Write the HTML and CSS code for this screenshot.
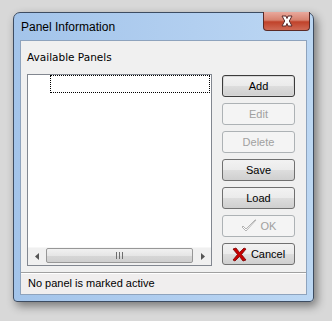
FILE: index.html
```html
<!DOCTYPE html>
<html lang="en">
  <head>
    <meta charset="utf-8" />
    <title>Panel Information</title>
    <link rel="stylesheet" href="styles.css">
  </head>
  <body>
    <div class="window">
      <div class="titlebar">
        <span class="title">Panel Information</span>
        <div class="close-btn">
          <svg width="18" height="12" viewBox="0 0 18 12">
            <path d="M4 1 L8 1 L9 3.5 L10 1 L14 1 L11.3 6 L14 11 L10 11 L9 8.5 L8 11 L4 11 L6.7 6 Z" fill="#fff" stroke="#5a2a2a" stroke-width="1" stroke-linejoin="round"/>
          </svg>
        </div>
      </div>
      <div class="client">
        <div class="content">
          <div class="caption">Available Panels</div>
          <div class="main-row">
            <div class="listbox">
              <div class="list-area">
                <div class="focus-row"></div>
              </div>
              <div class="hscroll">
                <div class="arrow">
                  <svg width="4" height="7" viewBox="0 0 4 7"><path d="M4 0 L0 3.5 L4 7 Z" fill="#555"/></svg>
                </div>
                <div class="track">
                  <div class="thumb">
                    <span class="grip"></span><span class="grip"></span><span class="grip"></span>
                  </div>
                </div>
                <div class="arrow">
                  <svg width="4" height="7" viewBox="0 0 4 7"><path d="M0 0 L4 3.5 L0 7 Z" fill="#555"/></svg>
                </div>
              </div>
            </div>
            <div class="buttons">
              <button class="btn default">Add</button>
              <button class="btn" disabled>Edit</button>
              <button class="btn" disabled>Delete</button>
              <button class="btn">Save</button>
              <button class="btn">Load</button>
              <button class="btn" disabled>
                <svg width="16" height="14" viewBox="0 0 16 14"><path d="M1 8 L5 12 L15 1 L14 1 L5 10 L2 7 Z" fill="#fff" stroke="#b4b4b4" stroke-width="1" stroke-linejoin="round"/></svg>
                OK
              </button>
              <button class="btn">
                <svg width="15" height="15" viewBox="0 0 15 15"><path d="M1 2 L4 1 L7.5 5.5 L12 1 L14 2 L9.5 7.5 L14 13 L11 14 L7.5 9.5 L3 14 L1 13 L5.5 7.5 Z" fill="#c80000" stroke="#7a0000" stroke-width="0.8" stroke-linejoin="round"/></svg>
                Cancel
              </button>
            </div>
          </div>
        </div>
        <div class="statusbar">No panel is marked active</div>
      </div>
    </div>
  </body>
</html>
```

FILE: styles.css
```css
body, html {
  margin: 0;
  padding: 0;
  width: 100%;
  height: 100%;
}
body {
  background: #d8d8d8;
  font-family: "Liberation Sans", Arial, sans-serif;
  font-size: 11px;
  color: #000;
  padding: 12px 0 0 13px;
  box-sizing: border-box;
}
.window {
  width: 301px;
  height: 290px;
  box-sizing: border-box;
  border: 1px solid #3d4c61;
  border-radius: 7px 7px 4px 4px;
  background: linear-gradient(to right, #a3c4ea, #b2cff0 60%, #bcd7f3);
  box-shadow: 3px 4px 10px rgba(0, 0, 0, 0.45);
  padding: 0 6px 6px 6px;
  display: flex;
  flex-direction: column;
}
.titlebar {
  height: 27px;
  display: flex;
  align-items: flex-start;
}
.title {
  flex: 1;
  font-size: 12px;
  margin: 7px 0 0 1px;
  color: #000;
}
.close-btn {
  width: 47px;
  height: 19px;
  margin: -1px -3px 0 0;
  box-sizing: border-box;
  border: 1px solid #5b2a26;
  border-top: none;
  border-radius: 0 0 4px 4px;
  background: linear-gradient(to bottom, #e9a99d, #d7826f 45%, #c0422a 55%, #cf6a55);
  display: flex;
  align-items: center;
  justify-content: center;
}
.client {
  flex: 1;
  background: #f0f0f0;
  border: 1px solid #8ea3bd;
  display: flex;
  flex-direction: column;
}
.content {
  flex: 1;
  padding: 10px 10px 0 6px;
  display: flex;
  flex-direction: column;
}
.caption {
  height: 13px;
  line-height: 13px;
  margin-bottom: 10px;
  font-family: "DejaVu Sans", sans-serif;
  font-size: 10.5px;
}
.main-row {
  display: flex;
  gap: 10px;
}
.listbox {
  width: 185px;
  height: 192px;
  box-sizing: border-box;
  border: 1px solid #828790;
  background: #fff;
  display: flex;
  flex-direction: column;
}
.list-area {
  flex: 1;
}
.focus-row {
  margin: 0 1px 0 22px;
  height: 18px;
  box-sizing: border-box;
  border: 1px dotted #000;
}
.hscroll {
  height: 17px;
  display: flex;
  background: #f0f0f0;
  border-top: 1px solid #f7f7f7;
}
.arrow {
  width: 17px;
  display: flex;
  align-items: center;
  justify-content: center;
}
.track {
  flex: 1;
  padding: 0 1px;
}
.thumb {
  height: 15px;
  margin-top: 0;
  box-sizing: border-box;
  border: 1px solid #979797;
  border-radius: 2px;
  background: linear-gradient(to bottom, #f1f1f1, #e6e6e6 50%, #d6d6d6 55%, #cfcfcf);
  display: flex;
  align-items: center;
  justify-content: center;
  gap: 2px;
}
.grip {
  width: 1px;
  height: 7px;
  background: #6e6e6e;
}
.buttons {
  margin-top: 1px;
  width: 73px;
  display: flex;
  flex-direction: column;
  gap: 6px;
}
.btn {
  height: 22px;
  padding: 0;
  box-sizing: border-box;
  border: 1px solid #707070;
  border-radius: 3px;
  background: linear-gradient(to bottom, #f2f2f2, #ebebeb 48%, #dddddd 52%, #cfcfcf);
  font-family: "Liberation Sans", Arial, sans-serif;
  font-size: 11px;
  color: #000;
  display: flex;
  align-items: center;
  justify-content: center;
  gap: 4px;
}
.btn.default {
  border-color: #3c3c3c;
  box-shadow: inset 0 0 0 1px #d8d8d8;
}
.btn:disabled {
  border-color: #adb2b5;
  background: #f4f4f4;
  color: #a0a0a0;
}
.statusbar {
  height: 22px;
  box-sizing: border-box;
  border-top: 1px solid #a0a0a0;
  box-shadow: inset 0 1px 0 #fff;
  background: #f0eeee;
  padding-left: 7px;
  line-height: 21px;
}
```
